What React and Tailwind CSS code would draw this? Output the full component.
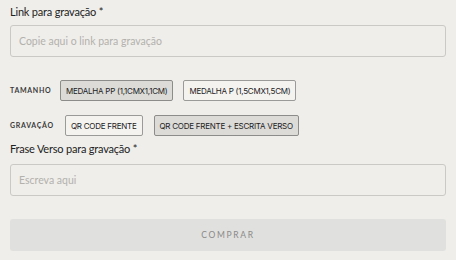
import React, { useState } from "react";

const sizes = ["MEDALHA PP (1,1CMX1,1CM)", "MEDALHA P (1,5CMX1,5CM)"];
const engravings = ["QR CODE FRENTE", "QR CODE FRENTE + ESCRITA VERSO"];

const Option = ({ label, active, onClick }) => (
  <button
    type="button"
    onClick={onClick}
    className={`h-[21px] px-[5px] border rounded-[2px] font-['Inter'] text-[8px] leading-none tracking-[-0.25px] text-[#222] ${
      active ? "bg-[#dcdbd8] border-[#8c8c8a]" : "bg-[#f4f3f0] border-[#9a9a98]"
    }`}
  >
    {label}
  </button>
);

const App = () => {
  const [size, setSize] = useState(0);
  const [engraving, setEngraving] = useState(1);
  const [link, setLink] = useState("");
  const [phrase, setPhrase] = useState("");

  return (
    <div
      className="w-[456px] h-[260px] bg-[#efeeea] px-[10px] pt-[5px]"
      style={{ fontFamily: "Lato, 'Noto Sans', sans-serif" }}
    >
      {/* Link */}
      <label className="block text-[11px] leading-[14px] tracking-[-0.2px] text-[#222]">
        Link para gravação *
      </label>
      <input
        value={link}
        onChange={(e) => setLink(e.target.value)}
        placeholder="Copie aqui o link para gravação"
        className="mt-[6px] w-full h-[32px] px-[8px] rounded-[3px] border border-[#cbc9c5] bg-[#efeeea] text-[10.5px] text-[#262626] placeholder-[#b3b1ad] outline-none"
      />

      {/* Tamanho */}
      <div className="flex items-center mt-[23px]">
        <span className="w-[50px] text-[7px] tracking-[0.7px] text-[#3a3a3a] font-bold">TAMANHO</span>
        <div className="flex gap-[10px]">
          {sizes.map((s, i) => (
            <Option key={s} label={s} active={size === i} onClick={() => setSize(i)} />
          ))}
        </div>
      </div>

      {/* Gravação */}
      <div className="flex items-center mt-[14px]">
        <span className="w-[55px] text-[7px] tracking-[0.7px] text-[#3a3a3a] font-bold">GRAVAÇÃO</span>
        <div className="flex gap-[11px]">
          {engravings.map((s, i) => (
            <Option key={s} label={s} active={engraving === i} onClick={() => setEngraving(i)} />
          ))}
        </div>
      </div>

      {/* Frase */}
      <label className="block mt-[6px] text-[11px] leading-[14px] tracking-[-0.2px] text-[#222]">
        Frase Verso para gravação *
      </label>
      <input
        value={phrase}
        onChange={(e) => setPhrase(e.target.value)}
        placeholder="Escreva aqui"
        className="mt-[8px] w-full h-[32px] px-[8px] rounded-[3px] border border-[#cbc9c5] bg-[#efeeea] text-[10.5px] text-[#262626] placeholder-[#b3b1ad] outline-none"
      />

      <button
        type="button"
        className="mt-[23px] w-full h-[32px] rounded-[3px] bg-[#e0e0de] text-[8.5px] tracking-[1.7px] text-[#8a8a88]"
      >
        COMPRAR
      </button>
    </div>
  );
};

export default App;
